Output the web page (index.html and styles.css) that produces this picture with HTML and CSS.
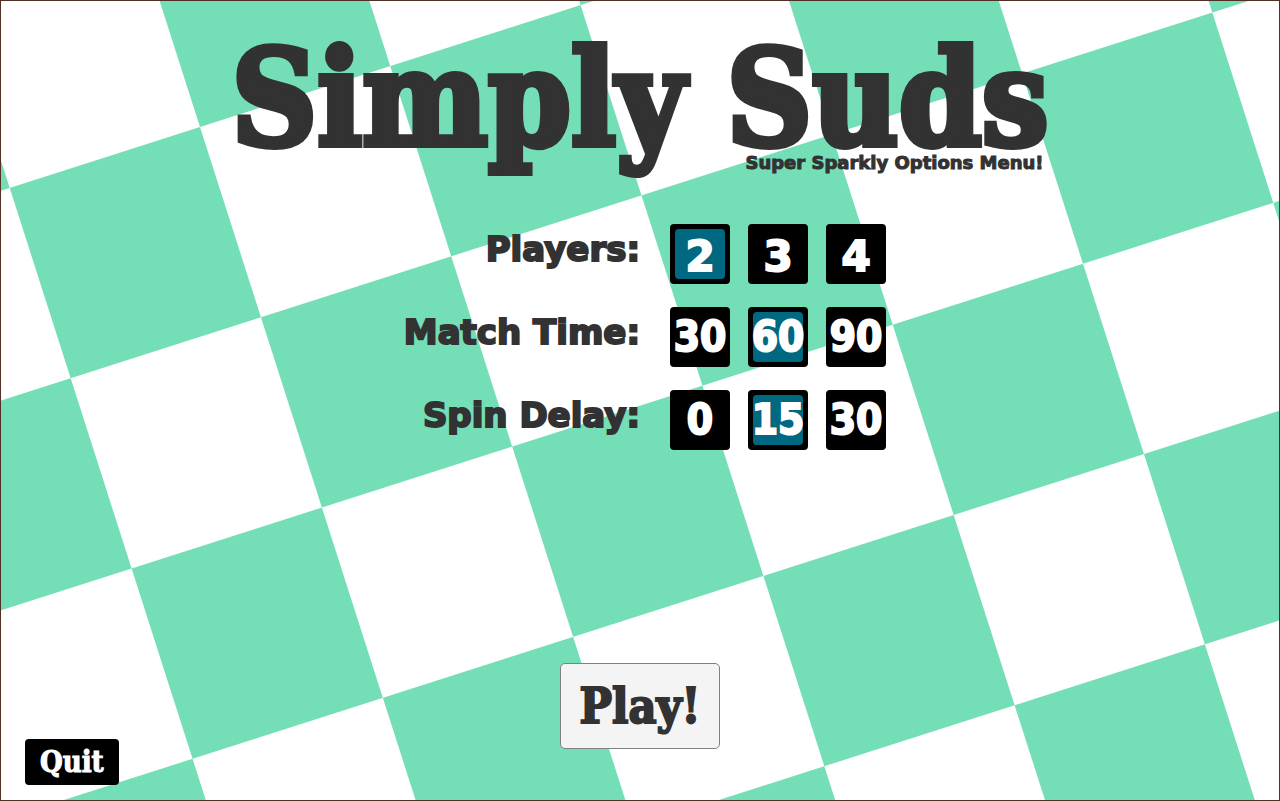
FILE: index.html
```html
<!DOCTYPE html>
<html lang="en">
<head>
    <meta charset="utf-8">
    <title>Simply Suds</title>
    <link rel="stylesheet" href="styles.css">
</head>
<body>
    <svg class="tiles" aria-hidden="true">
        <defs>
            <pattern id="checker" width="400" height="400" patternUnits="userSpaceOnUse" patternTransform="translate(200 127) rotate(-17.76) scale(0.999)">
                <rect x="200" y="0" width="200" height="200" fill="#74deb6"/>
                <rect x="0" y="200" width="200" height="200" fill="#74deb6"/>
            </pattern>
        </defs>
        <rect width="100%" height="100%" fill="url(#checker)"/>
    </svg>

    <main class="screen">
        <header class="header">
            <h1 class="title">Simply Suds</h1>
            <p class="subtitle">Super Sparkly Options Menu!</p>
        </header>

        <form class="options">
            <div class="row" role="radiogroup" aria-labelledby="players">
                <span class="row-name" id="players">Players:</span>
                <div class="choices wide">
                    <label class="choice"><input type="radio" name="players" value="2" checked><span>2</span></label>
                    <label class="choice"><input type="radio" name="players" value="3"><span>3</span></label>
                    <label class="choice"><input type="radio" name="players" value="4"><span>4</span></label>
                </div>
            </div>
            <div class="row" role="radiogroup" aria-labelledby="time">
                <span class="row-name" id="time">Match Time:</span>
                <div class="choices">
                    <label class="choice"><input type="radio" name="time" value="30"><span>30</span></label>
                    <label class="choice"><input type="radio" name="time" value="60" checked><span>60</span></label>
                    <label class="choice"><input type="radio" name="time" value="90"><span>90</span></label>
                </div>
            </div>
            <div class="row" role="radiogroup" aria-labelledby="delay">
                <span class="row-name" id="delay">Spin Delay:</span>
                <div class="choices">
                    <label class="choice"><input type="radio" name="delay" value="0"><span>0</span></label>
                    <label class="choice"><input type="radio" name="delay" value="15" checked><span>15</span></label>
                    <label class="choice"><input type="radio" name="delay" value="30"><span>30</span></label>
                </div>
            </div>
        </form>

        <footer class="footer">
            <button class="quit" type="button">Quit</button>
            <button class="play" type="button">Play!</button>
        </footer>
    </main>
</body>
</html>
```

FILE: styles.css
```css
* {
    box-sizing: border-box;
}
body {
    margin: 0;
    background-color: #ffffff;
    color: #323232;
    font-family: "DejaVu Sans", sans-serif;
    font-weight: bold;
}
.tiles {
    position: absolute;
    top: 0;
    left: 0;
    width: 100%;
    height: 100%;
}
.screen {
    position: relative;
    display: flex;
    flex-direction: column;
    min-height: 100vh;
    padding: 45px 24px 15px;
    border: 1px solid #4f3022;
}
.header {
    align-self: center;
    text-align: right;
}
.title {
    margin: 0;
    font-family: "DejaVu Serif Condensed", "DejaVu Serif", serif;
    font-size: 132px;
    line-height: 106px;
    white-space: nowrap;
    -webkit-text-stroke: 6px #323232;
}
.subtitle {
    margin: 0;
    padding-right: 5px;
    font-size: 18px;
    line-height: 22px;
    -webkit-text-stroke: 1px #323232;
}
.options {
    display: flex;
    flex-direction: column;
    gap: 23px;
    margin: 50px 0 40px;
}
.row {
    display: grid;
    grid-template-columns: 1fr 1fr;
}
.row-name {
    font-size: 34px;
    line-height: 50px;
    text-align: right;
    white-space: nowrap;
    -webkit-text-stroke: 2px #323232;
}
.choices {
    display: flex;
    gap: 18px;
    padding-left: 30px;
    font-family: "DejaVu Sans Condensed", "DejaVu Sans", sans-serif;
    font-size: 42px;
}
.choices.wide {
    font-family: "DejaVu Sans", sans-serif;
}
.choice {
    position: relative;
    width: 60px;
    height: 60px;
    border-radius: 4px;
    background-color: #000000;
    cursor: pointer;
}
.choice input {
    position: absolute;
    inset: 0;
    width: 100%;
    height: 100%;
    margin: 0;
    opacity: 0;
    cursor: pointer;
}
.choice span {
    display: flex;
    justify-content: center;
    align-items: center;
    height: 60px;
    border: 5px solid #000000;
    border-radius: 9px;
    color: #ffffff;
    line-height: 50px;
    -webkit-text-stroke: 2px #ffffff;
}
.choices.wide span {
    padding-top: 6px;
}
.choice input:checked + span {
    background-color: #006880;
}
.footer {
    display: grid;
    grid-template-columns: 1fr auto 1fr;
    align-items: end;
    margin-top: auto;
}
.quit, .play {
    font-family: "DejaVu Serif Condensed", "DejaVu Serif", serif;
    font-weight: bold;
    cursor: pointer;
}
.quit {
    grid-column: 1;
    justify-self: start;
    height: 46px;
    padding: 0 15px;
    border: none;
    border-radius: 4px;
    background-color: #000000;
    color: #ffffff;
    font-size: 29px;
    -webkit-text-stroke: 1px #ffffff;
}
.play {
    grid-column: 2;
    height: 86px;
    margin-bottom: 36px;
    padding: 0 19px;
    border: 1px solid #808080;
    border-radius: 5px;
    background-color: #f4f4f4;
    color: #323232;
    font-size: 48px;
    -webkit-text-stroke: 2px #323232;
}
```
